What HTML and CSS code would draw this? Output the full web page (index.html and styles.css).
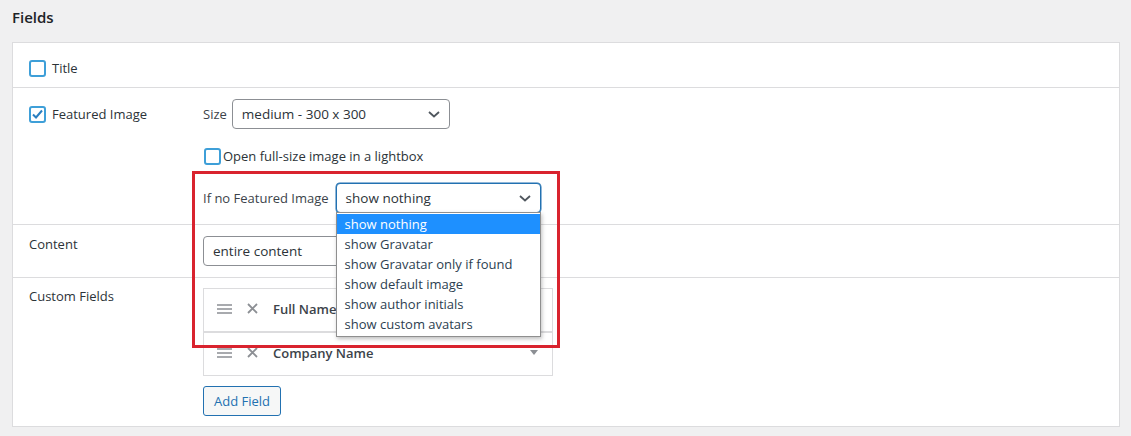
FILE: index.html
```html
<!DOCTYPE html>
<html lang="en">
<head>
  <meta charset="UTF-8">
  <title>Fields</title>
  <link rel="stylesheet" href="styles.css">
</head>
<body>

  <h2 class="title">Fields</h2>

  <div class="card">

    <div class="row row-first">
      <div class="row-label">
        <label class="check"><span class="box"></span>Title</label>
      </div>
    </div>

    <div class="row">
      <div class="row-label">
        <label class="check check-tall"><span class="box checked">
          <svg width="13" height="13" viewBox="0 0 13 13"><path d="M2 6.5l3 3 6-7" fill="none" stroke="#2a7fc1" stroke-width="2"/></svg>
        </span>Featured Image</label>
      </div>
      <div class="settings">
        <div class="line">
          <span class="hint">Size</span>
          <div class="select select-size">
            <span>medium - 300 x 300</span>
            <svg class="chev" width="12" height="7" viewBox="0 0 12 7"><path d="M1 1l5 4.5 5-4.5" fill="none" stroke="#50575e" stroke-width="1.8"/></svg>
          </div>
        </div>
        <div class="line">
          <label class="check check-tight"><span class="box"></span>Open full-size image in a lightbox</label>
        </div>
        <div class="line">
          <span class="hint">If no Featured Image</span>
          <div class="select-wrap">
            <div class="select select-focus">
              <span>show nothing</span>
              <svg class="chev" width="12" height="7" viewBox="0 0 12 7"><path d="M1 1l5 4.5 5-4.5" fill="none" stroke="#50575e" stroke-width="1.8"/></svg>
            </div>
            <ul class="dropdown">
              <li class="active">show nothing</li>
              <li>show Gravatar</li>
              <li>show Gravatar only if found</li>
              <li>show default image</li>
              <li>show author initials</li>
              <li>show custom avatars</li>
            </ul>
          </div>
        </div>
      </div>
    </div>

    <div class="row">
      <div class="row-label text-label">Content</div>
      <div class="settings">
        <div class="select select-content">
          <span>entire content</span>
        </div>
      </div>
    </div>

    <div class="row row-last">
      <div class="row-label text-label">Custom Fields</div>
      <div class="settings">
        <div class="field-list">
          <div class="field-item">
            <svg class="handle" width="15" height="10" viewBox="0 0 15 10"><path d="M0 1h15M0 5h15M0 9h15" stroke="#8c8f94" stroke-width="1.6"/></svg>
            <svg class="remove" width="11" height="11" viewBox="0 0 11 11"><path d="M1 1l9 9M10 1l-9 9" stroke="#8c8f94" stroke-width="1.8"/></svg>
            <b>Full Name</b>
          </div>
          <div class="field-item">
            <svg class="handle" width="15" height="10" viewBox="0 0 15 10"><path d="M0 1h15M0 5h15M0 9h15" stroke="#8c8f94" stroke-width="1.6"/></svg>
            <svg class="remove" width="11" height="11" viewBox="0 0 11 11"><path d="M1 1l9 9M10 1l-9 9" stroke="#8c8f94" stroke-width="1.8"/></svg>
            <b>Company Name</b>
            <span class="arrow"></span>
          </div>
        </div>
        <button class="add-btn">Add Field</button>
      </div>
    </div>

    <div class="highlight"></div>
  </div>

</body>
</html>
```

FILE: styles.css
```css
body {
  margin: 0;
  padding: 0 11px 0 12px;
  background: #f0f0f1;
  font-family: "Open Sans", "Noto Sans", sans-serif;
  font-size: 13px;
  color: #2c3338;
}
.title {
  margin: 0 0 8px;
  height: 34px;
  line-height: 34px;
  font-size: 15px;
  font-weight: 600;
  color: #1d2327;
}
.card {
  position: relative;
  background: #fff;
  border: 1px solid #dcdcde;
}
.row {
  display: flex;
  padding: 11px 16px;
  border-top: 1px solid #dcdcde;
}
.row-first {
  border-top: none;
  padding: 10px 16px 4px;
}
.row-last {
  padding: 10px 16px 10px 16px;
}
.row-label {
  width: 174px;
  flex-shrink: 0;
}
.text-label {
  line-height: 16px;
}
.check {
  display: flex;
  align-items: center;
  height: 30px;
  gap: 6px;
}
.check-tight {
  gap: 2px;
  margin-left: 1px;
}
.box {
  box-sizing: border-box;
  width: 17px;
  height: 17px;
  border: 2px solid #3e9fd8;
  border-radius: 3px;
  display: flex;
  align-items: center;
  justify-content: center;
}
.settings {
  display: flex;
  flex-direction: column;
  gap: 12px;
}
.row-last .settings {
  gap: 10px;
}
.line {
  display: flex;
  align-items: center;
  height: 30px;
  gap: 5px;
}
.hint {
  color: #3c434a;
}
.select {
  box-sizing: border-box;
  height: 30px;
  border: 1px solid #8c8f94;
  border-radius: 4px;
  display: flex;
  align-items: center;
  justify-content: space-between;
  padding: 0 9px 0 9px;
  font-size: 13.5px;
  color: #2c3338;
  background: #fff;
}
.select-size {
  width: 218px;
}
.select-content {
  width: 218px;
}
.select-wrap {
  position: relative;
  margin-left: 2px;
}
.select-focus {
  width: 205px;
  border-color: #2271b1;
  box-shadow: 0 0 0 0.5px #2271b1;
}
.dropdown {
  position: absolute;
  top: 29px;
  left: 0;
  z-index: 2;
  box-sizing: border-box;
  width: 205px;
  margin: 0;
  padding: 1px 0 2px;
  list-style: none;
  background: #fff;
  border: 1px solid #8f8f8f;
  box-shadow: 1px 2px 4px rgba(0, 0, 0, 0.25);
  font-size: 13px;
  color: #2c3e50;
}
.dropdown li {
  height: 20px;
  line-height: 20px;
  padding-left: 8px;
}
.dropdown li.active {
  background: #1e90ff;
  color: #fff;
}
.field-list {
  width: 350px;
}
.field-item {
  box-sizing: border-box;
  height: 44px;
  border: 1px solid #dcdcde;
  display: flex;
  align-items: center;
  padding: 0 14px 3px 13px;
}
.handle {
  margin-right: 15px;
}
.remove {
  margin-right: 15px;
}
.field-item b {
  font-weight: 600;
  color: #3c434a;
  flex: 1;
}
.arrow {
  width: 0;
  height: 0;
  border-left: 4px solid transparent;
  border-right: 4px solid transparent;
  border-top: 5px solid #8c8f94;
}
.add-btn {
  align-self: flex-start;
  height: 30px;
  padding: 0 10px;
  border: 1px solid #2271b1;
  border-radius: 3px;
  background: #f6f7f7;
  color: #2271b1;
  font-family: inherit;
  font-size: 13px;
}
.highlight {
  position: absolute;
  left: 179px;
  top: 128px;
  width: 368px;
  height: 177px;
  box-sizing: border-box;
  border: 3px solid #d9232e;
  pointer-events: none;
  z-index: 3;
}
```
